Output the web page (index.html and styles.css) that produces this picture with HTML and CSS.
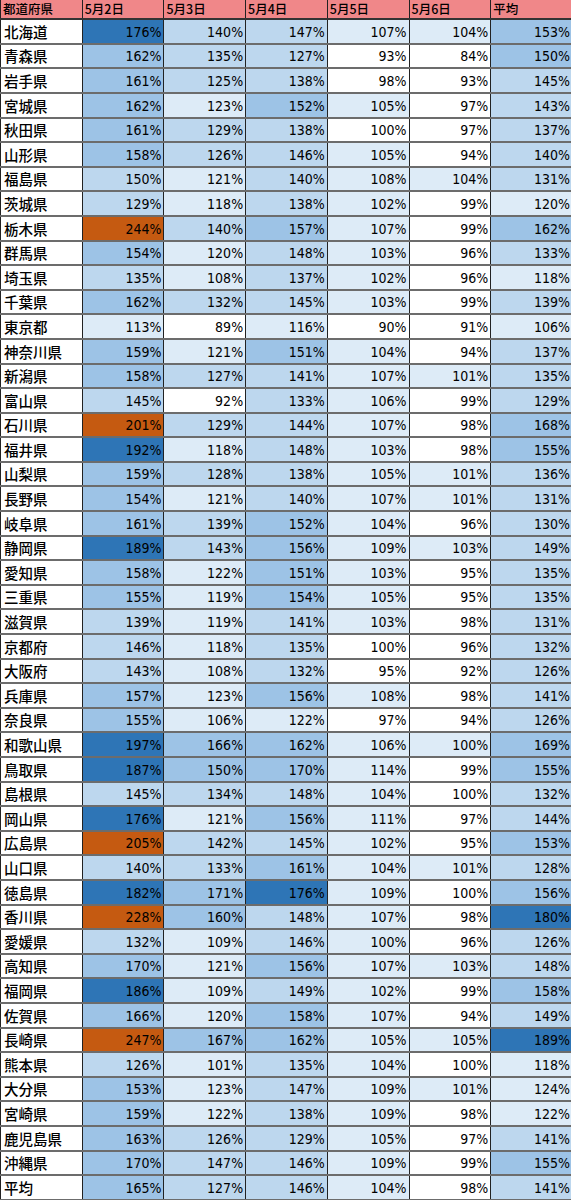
FILE: index.html
```html
<!DOCTYPE html>
<html lang="ja">
<head>
    <meta charset="UTF-8">
    <meta name="viewport" content="width=device-width, initial-scale=1.0">
    <title>都道府県別 人出の比較</title>
    <link rel="stylesheet" href="styles.css">
</head>
<body>
    <div class="sheet">
        <table class="ratio-table">
            <thead>
                <tr>
                    <th>都道府県</th>
                    <th>5月2日</th>
                    <th>5月3日</th>
                    <th>5月4日</th>
                    <th>5月5日</th>
                    <th>5月6日</th>
                    <th>平均</th>
                </tr>
            </thead>
            <tbody>
                <tr><td class="pref">北海道</td><td class="lv4">176%</td><td class="lv2">140%</td><td class="lv2">147%</td><td class="lv1">107%</td><td class="lv1">104%</td><td class="lv3">153%</td></tr>
                <tr><td class="pref">青森県</td><td class="lv3">162%</td><td class="lv2">135%</td><td class="lv2">127%</td><td class="lv0">93%</td><td class="lv0">84%</td><td class="lv3">150%</td></tr>
                <tr><td class="pref">岩手県</td><td class="lv3">161%</td><td class="lv2">125%</td><td class="lv2">138%</td><td class="lv0">98%</td><td class="lv0">93%</td><td class="lv2">145%</td></tr>
                <tr><td class="pref">宮城県</td><td class="lv3">162%</td><td class="lv1">123%</td><td class="lv3">152%</td><td class="lv1">105%</td><td class="lv0">97%</td><td class="lv2">143%</td></tr>
                <tr><td class="pref">秋田県</td><td class="lv3">161%</td><td class="lv2">129%</td><td class="lv2">138%</td><td class="lv0">100%</td><td class="lv0">97%</td><td class="lv2">137%</td></tr>
                <tr><td class="pref">山形県</td><td class="lv3">158%</td><td class="lv2">126%</td><td class="lv2">146%</td><td class="lv1">105%</td><td class="lv0">94%</td><td class="lv2">140%</td></tr>
                <tr><td class="pref">福島県</td><td class="lv2">150%</td><td class="lv1">121%</td><td class="lv2">140%</td><td class="lv1">108%</td><td class="lv1">104%</td><td class="lv2">131%</td></tr>
                <tr><td class="pref">茨城県</td><td class="lv2">129%</td><td class="lv1">118%</td><td class="lv2">138%</td><td class="lv1">102%</td><td class="lv0">99%</td><td class="lv1">120%</td></tr>
                <tr><td class="pref">栃木県</td><td class="lv5">244%</td><td class="lv2">140%</td><td class="lv3">157%</td><td class="lv1">107%</td><td class="lv0">99%</td><td class="lv3">162%</td></tr>
                <tr><td class="pref">群馬県</td><td class="lv3">154%</td><td class="lv1">120%</td><td class="lv2">148%</td><td class="lv1">103%</td><td class="lv0">96%</td><td class="lv2">133%</td></tr>
                <tr><td class="pref">埼玉県</td><td class="lv2">135%</td><td class="lv1">108%</td><td class="lv2">137%</td><td class="lv1">102%</td><td class="lv0">96%</td><td class="lv1">118%</td></tr>
                <tr><td class="pref">千葉県</td><td class="lv3">162%</td><td class="lv2">132%</td><td class="lv2">145%</td><td class="lv1">103%</td><td class="lv0">99%</td><td class="lv2">139%</td></tr>
                <tr><td class="pref">東京都</td><td class="lv1">113%</td><td class="lv0">89%</td><td class="lv1">116%</td><td class="lv0">90%</td><td class="lv0">91%</td><td class="lv1">106%</td></tr>
                <tr><td class="pref">神奈川県</td><td class="lv3">159%</td><td class="lv1">121%</td><td class="lv3">151%</td><td class="lv1">104%</td><td class="lv0">94%</td><td class="lv2">137%</td></tr>
                <tr><td class="pref">新潟県</td><td class="lv3">158%</td><td class="lv2">127%</td><td class="lv2">141%</td><td class="lv1">107%</td><td class="lv1">101%</td><td class="lv2">135%</td></tr>
                <tr><td class="pref">富山県</td><td class="lv2">145%</td><td class="lv0">92%</td><td class="lv2">133%</td><td class="lv1">106%</td><td class="lv0">99%</td><td class="lv2">129%</td></tr>
                <tr><td class="pref">石川県</td><td class="lv5">201%</td><td class="lv2">129%</td><td class="lv2">144%</td><td class="lv1">107%</td><td class="lv0">98%</td><td class="lv3">168%</td></tr>
                <tr><td class="pref">福井県</td><td class="lv4">192%</td><td class="lv1">118%</td><td class="lv2">148%</td><td class="lv1">103%</td><td class="lv0">98%</td><td class="lv3">155%</td></tr>
                <tr><td class="pref">山梨県</td><td class="lv3">159%</td><td class="lv2">128%</td><td class="lv2">138%</td><td class="lv1">105%</td><td class="lv1">101%</td><td class="lv2">136%</td></tr>
                <tr><td class="pref">長野県</td><td class="lv3">154%</td><td class="lv1">121%</td><td class="lv2">140%</td><td class="lv1">107%</td><td class="lv1">101%</td><td class="lv2">131%</td></tr>
                <tr><td class="pref">岐阜県</td><td class="lv3">161%</td><td class="lv2">139%</td><td class="lv3">152%</td><td class="lv1">104%</td><td class="lv0">96%</td><td class="lv2">130%</td></tr>
                <tr><td class="pref">静岡県</td><td class="lv4">189%</td><td class="lv2">143%</td><td class="lv3">156%</td><td class="lv1">109%</td><td class="lv1">103%</td><td class="lv2">149%</td></tr>
                <tr><td class="pref">愛知県</td><td class="lv3">158%</td><td class="lv1">122%</td><td class="lv3">151%</td><td class="lv1">103%</td><td class="lv0">95%</td><td class="lv2">135%</td></tr>
                <tr><td class="pref">三重県</td><td class="lv3">155%</td><td class="lv1">119%</td><td class="lv3">154%</td><td class="lv1">105%</td><td class="lv0">95%</td><td class="lv2">135%</td></tr>
                <tr><td class="pref">滋賀県</td><td class="lv2">139%</td><td class="lv1">119%</td><td class="lv2">141%</td><td class="lv1">103%</td><td class="lv0">98%</td><td class="lv2">131%</td></tr>
                <tr><td class="pref">京都府</td><td class="lv2">146%</td><td class="lv1">118%</td><td class="lv2">135%</td><td class="lv0">100%</td><td class="lv0">96%</td><td class="lv2">132%</td></tr>
                <tr><td class="pref">大阪府</td><td class="lv2">143%</td><td class="lv1">108%</td><td class="lv2">132%</td><td class="lv0">95%</td><td class="lv0">92%</td><td class="lv2">126%</td></tr>
                <tr><td class="pref">兵庫県</td><td class="lv3">157%</td><td class="lv1">123%</td><td class="lv3">156%</td><td class="lv1">108%</td><td class="lv0">98%</td><td class="lv2">141%</td></tr>
                <tr><td class="pref">奈良県</td><td class="lv3">155%</td><td class="lv1">106%</td><td class="lv1">122%</td><td class="lv0">97%</td><td class="lv0">94%</td><td class="lv2">126%</td></tr>
                <tr><td class="pref">和歌山県</td><td class="lv4">197%</td><td class="lv3">166%</td><td class="lv3">162%</td><td class="lv1">106%</td><td class="lv1">100%</td><td class="lv3">169%</td></tr>
                <tr><td class="pref">鳥取県</td><td class="lv4">187%</td><td class="lv3">150%</td><td class="lv3">170%</td><td class="lv1">114%</td><td class="lv0">99%</td><td class="lv3">155%</td></tr>
                <tr><td class="pref">島根県</td><td class="lv2">145%</td><td class="lv2">134%</td><td class="lv2">148%</td><td class="lv1">104%</td><td class="lv0">100%</td><td class="lv2">132%</td></tr>
                <tr><td class="pref">岡山県</td><td class="lv4">176%</td><td class="lv1">121%</td><td class="lv3">156%</td><td class="lv1">111%</td><td class="lv0">97%</td><td class="lv2">144%</td></tr>
                <tr><td class="pref">広島県</td><td class="lv5">205%</td><td class="lv2">142%</td><td class="lv2">145%</td><td class="lv1">102%</td><td class="lv0">95%</td><td class="lv3">153%</td></tr>
                <tr><td class="pref">山口県</td><td class="lv2">140%</td><td class="lv2">133%</td><td class="lv3">161%</td><td class="lv1">104%</td><td class="lv1">101%</td><td class="lv2">128%</td></tr>
                <tr><td class="pref">徳島県</td><td class="lv4">182%</td><td class="lv3">171%</td><td class="lv4">176%</td><td class="lv1">109%</td><td class="lv0">100%</td><td class="lv3">156%</td></tr>
                <tr><td class="pref">香川県</td><td class="lv5">228%</td><td class="lv3">160%</td><td class="lv2">148%</td><td class="lv1">107%</td><td class="lv0">98%</td><td class="lv4">180%</td></tr>
                <tr><td class="pref">愛媛県</td><td class="lv2">132%</td><td class="lv1">109%</td><td class="lv2">146%</td><td class="lv1">100%</td><td class="lv0">96%</td><td class="lv2">126%</td></tr>
                <tr><td class="pref">高知県</td><td class="lv3">170%</td><td class="lv1">121%</td><td class="lv3">156%</td><td class="lv1">107%</td><td class="lv1">103%</td><td class="lv2">148%</td></tr>
                <tr><td class="pref">福岡県</td><td class="lv4">186%</td><td class="lv1">109%</td><td class="lv2">149%</td><td class="lv1">102%</td><td class="lv0">99%</td><td class="lv3">158%</td></tr>
                <tr><td class="pref">佐賀県</td><td class="lv3">166%</td><td class="lv1">120%</td><td class="lv3">158%</td><td class="lv1">107%</td><td class="lv0">94%</td><td class="lv2">149%</td></tr>
                <tr><td class="pref">長崎県</td><td class="lv5">247%</td><td class="lv3">167%</td><td class="lv3">162%</td><td class="lv1">105%</td><td class="lv1">105%</td><td class="lv4">189%</td></tr>
                <tr><td class="pref">熊本県</td><td class="lv2">126%</td><td class="lv1">101%</td><td class="lv2">135%</td><td class="lv1">104%</td><td class="lv0">100%</td><td class="lv1">118%</td></tr>
                <tr><td class="pref">大分県</td><td class="lv3">153%</td><td class="lv1">123%</td><td class="lv2">147%</td><td class="lv1">109%</td><td class="lv1">101%</td><td class="lv1">124%</td></tr>
                <tr><td class="pref">宮崎県</td><td class="lv3">159%</td><td class="lv1">122%</td><td class="lv2">138%</td><td class="lv1">109%</td><td class="lv0">98%</td><td class="lv1">122%</td></tr>
                <tr><td class="pref">鹿児島県</td><td class="lv3">163%</td><td class="lv2">126%</td><td class="lv2">129%</td><td class="lv1">105%</td><td class="lv0">97%</td><td class="lv2">141%</td></tr>
                <tr><td class="pref">沖縄県</td><td class="lv3">170%</td><td class="lv2">147%</td><td class="lv2">146%</td><td class="lv1">109%</td><td class="lv0">99%</td><td class="lv3">155%</td></tr>
                <tr><td class="pref">平均</td><td class="lv3">165%</td><td class="lv2">127%</td><td class="lv2">146%</td><td class="lv1">104%</td><td class="lv0">98%</td><td class="lv2">141%</td></tr>
            </tbody>
        </table>
    </div>
</body>
</html>
```

FILE: styles.css
```css
body {
    margin: 0;
    background: #fff;
    font-family: "Noto Sans CJK JP", sans-serif;
    color: #000;
}
.sheet {
    width: 571px;
    overflow: hidden;
}
.ratio-table {
    width: 573px;
    border-collapse: collapse;
    table-layout: fixed;
    border-left: 1px solid #222;
}
.ratio-table th {
    height: 17px;
    padding: 0 2px;
    background-color: #f08789;
    border-right: 1px solid #222;
    border-bottom: 2px solid #333;
    font-size: 12.5px;
    font-weight: 500;
    line-height: 18.2px;
    text-align: left;
    vertical-align: top;
    white-space: nowrap;
}
.ratio-table tbody tr {
    height: 24.6px;
}
.ratio-table td {
    padding: 0 2px 3px 0;
    border-right: 1px solid #222;
    border-bottom: 2px solid #6c6c6c;
    font-family: "Liberation Sans Narrow", "DejaVu Sans Condensed", "Liberation Sans", sans-serif;
    font-stretch: condensed;
    font-size: 14px;
    line-height: 16px;
    text-align: right;
    vertical-align: bottom;
    white-space: nowrap;
}
.ratio-table td.pref {
    padding-left: 3px;
    font-family: "Noto Sans CJK JP", sans-serif;
    font-size: 14.5px;
    font-weight: 500;
    text-align: left;
    background-color: #fff;
}
/* colour steps of the ratio */
.lv0 { background-color: #fff; }
.lv1 { background-color: #ddebf7; }
.lv2 { background-color: #bdd7ee; }
.lv3 { background-color: #9dc3e6; }
.lv4 { background-color: #2e75b6; }
.lv5 { background-color: #c55a11; }
```
